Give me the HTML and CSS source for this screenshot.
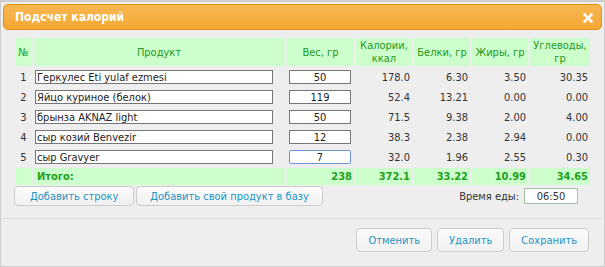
FILE: index.html
```html
<!DOCTYPE html>
<html lang="ru">
<head>
    <meta charset="UTF-8">
    <title>Подсчет калорий</title>
    <link rel="stylesheet" href="styles.css">
</head>
<body>
    <div class="dialog">
        <div class="titlebar">
            <span class="title">Подсчет калорий</span>
            <a class="close">
                <svg width="10" height="10" viewBox="0 0 10 10"><path d="M1.5 1.5 L8.5 8.5 M8.5 1.5 L1.5 8.5" stroke="#fff" stroke-width="2.6" stroke-linecap="square"/></svg>
            </a>
        </div>
        <div class="content">
            <table class="calc">
                <colgroup>
                    <col class="c-num"><col class="c-name"><col class="c-weight">
                    <col class="c-val"><col class="c-val"><col class="c-val"><col class="c-last">
                </colgroup>
                <thead>
                    <tr>
                        <th>№</th>
                        <th>Продукт</th>
                        <th>Вес, гр</th>
                        <th>Калории,<br>ккал</th>
                        <th>Белки, гр</th>
                        <th>Жиры, гр</th>
                        <th>Углеводы,<br>гр</th>
                    </tr>
                </thead>
                <tbody>
                    <tr>
                        <td class="num">1</td>
                        <td class="name"><input class="field" value="Геркулес Eti yulaf ezmesi"></td>
                        <td class="weight"><input class="field" value="50"></td>
                        <td>178.0</td><td>6.30</td><td>3.50</td><td>30.35</td>
                    </tr>
                    <tr>
                        <td class="num">2</td>
                        <td class="name"><input class="field" value="Яйцо куриное (белок)"></td>
                        <td class="weight"><input class="field" value="119"></td>
                        <td>52.4</td><td>13.21</td><td>0.00</td><td>0.00</td>
                    </tr>
                    <tr>
                        <td class="num">3</td>
                        <td class="name"><input class="field" value="брынза AKNAZ light"></td>
                        <td class="weight"><input class="field" value="50"></td>
                        <td>71.5</td><td>9.38</td><td>2.00</td><td>4.00</td>
                    </tr>
                    <tr>
                        <td class="num">4</td>
                        <td class="name"><input class="field" value="сыр козий Benvezir"></td>
                        <td class="weight"><input class="field" value="12"></td>
                        <td>38.3</td><td>2.38</td><td>2.94</td><td>0.00</td>
                    </tr>
                    <tr>
                        <td class="num">5</td>
                        <td class="name"><input class="field" value="сыр Gravyer"></td>
                        <td class="weight"><input class="field focused" value="7"></td>
                        <td>32.0</td><td>1.96</td><td>2.55</td><td>0.30</td>
                    </tr>
                </tbody>
                <tfoot>
                    <tr class="total">
                        <td></td>
                        <td class="label">Итого:</td>
                        <td>238</td><td>372.1</td><td>33.22</td><td>10.99</td><td>34.65</td>
                    </tr>
                </tfoot>
            </table>
            <div class="tools">
                <button class="btn small">Добавить строку</button>
                <button class="btn small wide">Добавить свой продукт в базу</button>
                <div class="meal-time">
                    <label>Время еды:</label>
                    <input class="time" value="06:50">
                </div>
            </div>
        </div>
        <div class="buttonpane">
            <button class="btn">Отменить</button>
            <button class="btn">Удалить</button>
            <button class="btn">Сохранить</button>
        </div>
    </div>
</body>
</html>
```

FILE: styles.css
```css
*{
    margin: 0;
    padding: 0;
    box-sizing: border-box;
}
html, body{
    height: 100%;
}
body{
    background-color: #cfcfcf;
    font-family: "DejaVu Sans Condensed", "Liberation Sans", sans-serif;
    font-size: 11px;
    color: #333;
}
.dialog{
    margin-top: 1px;
    height: 266px;
    border: 1px solid #cccccc;
    background-color: #eeeeee;
    padding: 2px;
    display: flex;
    flex-direction: column;
}
.titlebar{
    height: 26px;
    border: 1px solid #e78f08;
    border-radius: 5px;
    background: linear-gradient(#f8b652, #f5a833);
    display: flex;
    align-items: center;
    justify-content: space-between;
    padding: 0 8px 0 11px;
}
.title{
    color: #fff;
    font-weight: bold;
    font-size: 12px;
}
.close{
    display: flex;
    margin-top: 1px;
}
.content{
    padding: 6px 10px 0 11px;
}
.calc{
    width: 578px;
    table-layout: fixed;
    border-collapse: separate;
    border-spacing: 2px;
}
.c-num{ width: 15px; }
.c-name{ width: 252px; }
.c-weight{ width: 67px; }
.c-val{ width: 56px; }
.c-last{ width: 60px; }

.calc th{
    height: 28px;
    background-color: #ccffcc;
    color: #1e9a1e;
    font-weight: normal;
    line-height: 13px;
    text-align: center;
}
.calc td{
    height: 18px;
    text-align: right;
    padding: 0 2px;
}
.calc td.num{
    text-align: center;
    padding: 0;
}
.calc td.name{
    text-align: left;
    padding: 0 0 0 2px;
}
.calc td.weight{
    text-align: left;
    padding: 0 0 0 2px;
}
.field{
    display: block;
    height: 14px;
    border: 1px solid #767676;
    background: #fff;
    font-family: inherit;
    font-size: 11px;
    color: #222;
    padding: 0 1px;
    outline: none;
}
.name .field{
    width: 238px;
}
.weight .field{
    width: 62px;
    text-align: center;
}
.field.focused{
    border-color: #6f93d8;
    border-radius: 2px;
}
.total td{
    height: 17px;
    background-color: #ccffcc;
    color: #22a022;
    font-weight: bold;
}
.total td.label{
    text-align: left;
    padding-left: 4px;
}

.btn{
    font-family: inherit;
    font-size: 11px;
    color: #1c94c4;
    background: linear-gradient(#fbfbfb, #f1f1f1);
    border: 1px solid #cccccc;
    border-radius: 4px;
    height: 24px;
    padding: 0 12px;
    cursor: pointer;
}
.btn.small{
    height: 20px;
    padding: 0 15px;
}
.btn.wide{
    padding: 0 13px;
}
.tools{
    display: flex;
    align-items: center;
    gap: 2px;
    margin-top: -1px;
    padding-bottom: 12px;
}
.meal-time{
    margin-left: auto;
    margin-right: 14px;
    display: flex;
    align-items: center;
    gap: 5px;
}
.time{
    width: 54px;
    height: 16px;
    border: 1px solid #a3c2a3;
    background: #fff;
    font-family: inherit;
    font-size: 11px;
    color: #333;
    text-align: center;
}
.buttonpane{
    border-top: 1px solid #dddddd;
    display: flex;
    justify-content: flex-end;
    gap: 5px;
    padding: 9px 13px 0 0;
}
.buttonpane .btn{
    padding: 0 11px;
}
```
